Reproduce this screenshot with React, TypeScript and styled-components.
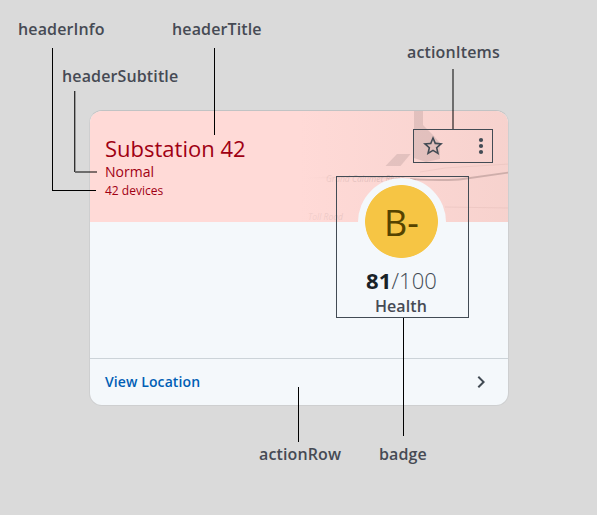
import React from 'react';
import styled, { createGlobalStyle } from 'styled-components';

const GlobalStyle = createGlobalStyle`
  *, *::before, *::after { box-sizing: border-box; }
  body {
    margin: 0;
    background: #dadada;
    font-family: 'Open Sans', 'Noto Sans', sans-serif;
  }
`;

const Canvas = styled.main`
  position: relative;
  width: 597px;
  height: 515px;
  padding: 110px 88px 0 89px;
  overflow: hidden;
  background: #dadada;
`;

const Card = styled.article`
  display: flex;
  flex-direction: column;
  width: 420px;
  height: 296px;
  border: 1px solid rgba(66, 78, 84, 0.07);
  border-top-color: rgba(66, 78, 84, 0.16);
  border-radius: 13px;
  background: #f4f8fb;
  background-clip: padding-box;
  overflow: hidden;
`;

const Header = styled.header`
  position: relative;
  display: flex;
  justify-content: space-between;
  height: 111px;
  flex: none;
  padding: 24px 15px 0 15px;
  background: #ffdad7;
`;

const MapArt = styled.svg`
  position: absolute;
  top: 0;
  right: 0;
`;

const HeaderInfo = styled.div`
  position: relative;
  display: flex;
  flex-direction: column;
  margin-top: -1px;
  color: #9f0013;
  white-space: nowrap;
`;

const HeaderTitle = styled.h1`
  margin: 0;
  font-size: 22px;
  font-weight: 400;
  line-height: 28px;
`;

const HeaderSubtitle = styled.span`
  font-size: 14px;
  line-height: 20px;
`;

const HeaderDetail = styled.span`
  font-size: 12px;
  line-height: 17px;
`;

const ActionItems = styled.div`
  position: relative;
  display: flex;
  align-items: center;
  justify-content: space-between;
  width: 80px;
  height: 34px;
  margin-top: -6px;
  padding: 0 6px 0 7px;
  border: 1px solid #424b54;
`;

const Body = styled.section`
  display: flex;
  justify-content: flex-end;
  flex: 1;
  padding-right: 39px;
`;

const Badge = styled.div`
  position: relative;
  display: flex;
  flex-direction: column;
  align-items: center;
  width: 133px;
  height: 142px;
  margin-top: -46px;
  padding-top: 1px;
  border: 1px solid #424b54;
  white-space: nowrap;
`;

const Grade = styled.div`
  display: grid;
  place-items: center;
  width: 88px;
  height: 88px;
  margin-right: 2px;
  padding-top: 2px;
  border-radius: 50%;
  background: radial-gradient(circle at 43.500px 43.500px, #f6c544 36px, #f4f8fb 36.800px);
  color: #554300;
  font-size: 36px;
  line-height: 48px;
`;

const Score = styled.div`
  margin-top: -2px;
  margin-right: 2px;
  color: #424b54;
  font-size: 22px;
  font-weight: 300;
  letter-spacing: 0.1px;
  line-height: 32px;

  strong {
    color: #192227;
    font-weight: 700;
  }
`;

const BadgeLabel = styled.div`
  margin-right: 3px;
  color: #464a54;
  font-size: 16px;
  font-weight: 600;
  letter-spacing: 0.12px;
  line-height: 20px;
`;

const ActionRow = styled.footer`
  display: flex;
  align-items: center;
  justify-content: space-between;
  flex: none;
  height: 47px;
  padding: 0 15px;
  border-top: 1px solid #ccd3d8;
  color: #005eb5;
  font-size: 14px;
  font-weight: 600;
  letter-spacing: 0.1px;
`;

const ActionText = styled.span`
  padding-bottom: 2px;
`;

const Callout = styled.span<{ $x: number; $y: number }>`
  position: absolute;
  left: ${({ $x }) => $x}px;
  top: ${({ $y }) => $y}px;
  color: #464a54;
  font-size: 16px;
  font-weight: 600;
  letter-spacing: 0.13px;
  line-height: 22px;
  white-space: nowrap;
`;

const Leaders = styled.svg`
  position: absolute;
  inset: 0;
  pointer-events: none;
`;

const callouts = [
  { text: 'headerInfo', x: 18, y: 18 },
  { text: 'headerTitle', x: 172, y: 18 },
  { text: 'headerSubtitle', x: 62, y: 65 },
  { text: 'actionItems', x: 407, y: 41 },
  { text: 'actionRow', x: 259, y: 443 },
  { text: 'badge', x: 379, y: 443 },
];

const MapBackdrop = () => (
  <MapArt width="209" height="111" viewBox="299 111 209 111" aria-hidden="true">
    <defs>
      <linearGradient id="mapTint" x1="0" x2="1">
        <stop offset="0" stopColor="#d5b2a8" stopOpacity="0" />
        <stop offset="1" stopColor="#d5b2a8" stopOpacity="0.2" />
      </linearGradient>
      <linearGradient id="labelFade" gradientUnits="userSpaceOnUse" x1="305" x2="410" y1="0" y2="0">
        <stop offset="0" stopColor="#9f8482" stopOpacity="0.12" />
        <stop offset="1" stopColor="#9f8482" stopOpacity="0.42" />
      </linearGradient>
      <linearGradient id="riverFade" gradientUnits="userSpaceOnUse" x1="305" x2="430" y1="0" y2="0">
        <stop offset="0" stopColor="#bd9894" stopOpacity="0" />
        <stop offset="1" stopColor="#a98581" stopOpacity="0.3" />
      </linearGradient>
    </defs>
    <rect x="299" y="111" width="209" height="111" fill="url(#mapTint)" />
    <path d="M414 110h9v15l11 11 6 7v16l-14 3-12-4v-34z" fill="#9b8583" opacity=".25" />
    <path d="M397 154h13.500l-10 12h-15z" fill="#9b8583" opacity=".25" />
    <path d="M306 178c35-1 65-2 82 0l28 2" fill="none" stroke="url(#riverFade)" strokeWidth="1.500" />
    <path d="M410 179c20 1 38 2 53 0l46-6.500" fill="none" stroke="#967c7a" strokeWidth="1.800" opacity=".42" />
    <path d="M420 172l25-4 64-4M445 207l64 1" fill="none" stroke="#c69f9b" opacity=".2" />
    <g fill="url(#labelFade)" fontFamily="Open Sans, sans-serif" fontSize="8.500" fontStyle="italic">
      <text x="326" y="181.500">Grand Calumet River</text>
      <text x="308" y="220">Toll Road</text>
    </g>
  </MapArt>
);

export default function App() {
  return (
    <>
      <GlobalStyle />
      <Canvas>
        <Card>
          <Header>
            <MapBackdrop />
            <HeaderInfo>
              <HeaderTitle>Substation 42</HeaderTitle>
              <HeaderSubtitle>Normal</HeaderSubtitle>
              <HeaderDetail>42 devices</HeaderDetail>
            </HeaderInfo>
            <ActionItems>
              <svg width="24" height="24" viewBox="0 0 24 24" fill="#424b54" aria-label="Favorite">
                <path d="M22 9.240l-7.190-.62L12 2 9.190 8.630 2 9.240l5.460 4.730L5.820 21 12 17.270 18.180 21l-1.630-7.030L22 9.240zM12 15.400l-3.760 2.270 1-4.280-3.320-2.880 4.380-.38L12 6.100l1.710 4.040 4.380.38-3.320 2.880 1 4.280L12 15.400z" />
              </svg>
              <svg width="10" height="24" viewBox="0 0 10 24" fill="#424b54" aria-label="More">
                <circle cx="5" cy="6" r="2.100" />
                <circle cx="5" cy="12" r="2.100" />
                <circle cx="5" cy="18" r="2.100" />
              </svg>
            </ActionItems>
          </Header>
          <Body>
            <Badge>
              <Grade>B-</Grade>
              <Score><strong>81</strong>/100</Score>
              <BadgeLabel>Health</BadgeLabel>
            </Badge>
          </Body>
          <ActionRow>
            <ActionText>View Location</ActionText>
            <svg width="24" height="24" viewBox="0 0 24 24" fill="#424b54" aria-hidden="true">
              <path d="M10 6L8.590 7.410 13.170 12l-4.580 4.590L10 18l6-6z" />
            </svg>
          </ActionRow>
        </Card>
        <Leaders width="597" height="515" fill="none" stroke="#000" shapeRendering="crispEdges" aria-hidden="true">
          <path d="M52.500 48V190.500H96M214.500 48V135M298.500 387V442M403.500 318V436" />
          <path d="M74.500 91V171.500" stroke="#303030" />
          <path d="M75.500 91V171" stroke="#9a9a9a" />
          <path d="M75 172H97M453 69V129" strokeWidth="2" stroke="#000" strokeOpacity=".5" />
        </Leaders>
        {callouts.map(({ text, x, y }) => (
          <Callout key={text} $x={x} $y={y}>{text}</Callout>
        ))}
      </Canvas>
    </>
  );
}
